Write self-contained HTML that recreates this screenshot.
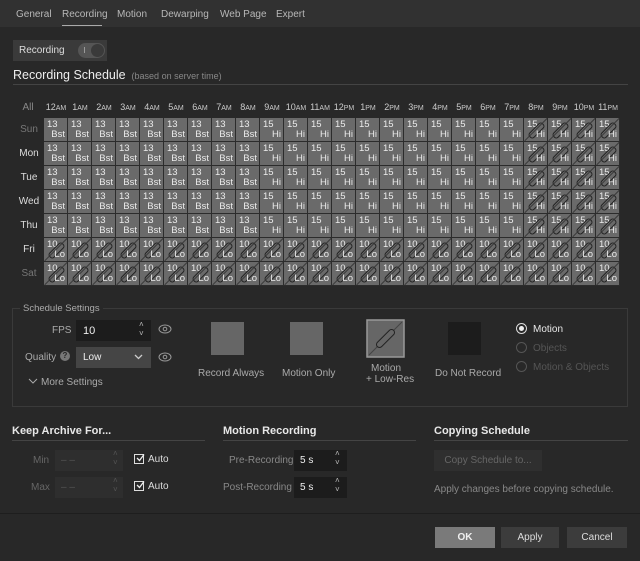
<!DOCTYPE html>
<html><head><meta charset="utf-8">
<style>
*{box-sizing:border-box}
body{margin:0;width:640px;height:561px;background:#282828;font-family:"Liberation Sans",sans-serif;color:#ddd;position:relative;overflow:hidden;font-size:10px}
.a{position:absolute;white-space:nowrap}
.tabs{position:absolute;left:0;top:0;width:640px;height:27px;background:#313131}
.tabs span{position:absolute;top:9px;font-size:10px;color:#b8b8b8}
.g{position:absolute;left:44px;top:118px;width:576px;display:flex;flex-wrap:wrap;background:#2c2c2c}
.g i{display:block;width:23px;height:23px;margin:0 1px 1px 0;background:#6a6a6a;position:relative;font-style:normal;font-size:9.5px;line-height:9px;color:#ececec;padding:2px 0 0 3px;overflow:hidden}
.g i b{position:absolute;right:2px;bottom:2px;font-weight:normal;z-index:2}
.g i.p::before{content:"";position:absolute;left:3px;top:9px;width:17px;height:5px;border:1px solid #222;border-radius:3px;transform:rotate(-45deg)}
.g i.p::after{content:"";position:absolute;left:-4px;top:11px;width:32px;height:1px;background:#3a3a3a;transform:rotate(-45deg)}
.hd span{position:absolute;top:102px;width:24px;text-align:center;font-size:9px;color:#ccc}
.hd small{font-size:7px}
.day{position:absolute;left:16px;width:26px;text-align:center;font-size:10px;color:#ddd}
.lbl{color:#aaa}
.btn{position:absolute;height:21px;top:527px;text-align:center;line-height:21px;font-size:10px;color:#ddd;background:#3c3c3c}
.line{position:absolute;height:1px;background:#444}
</style></head><body>
<div class="tabs">
<span style="left:16px">General</span><span style="left:62px">Recording</span><span style="left:117px">Motion</span><span style="left:161px">Dewarping</span><span style="left:220px">Web Page</span><span style="left:276px">Expert</span>
<div style="position:absolute;left:62px;top:25px;width:40px;height:1px;background:#aaa"></div>
</div>

<div class="a" style="left:13px;top:40px;width:94px;height:21px;background:#3a3a3a"></div>
<div class="a" style="left:19px;top:45px;color:#ddd">Recording</div>
<div class="a" style="left:78px;top:43px;width:27px;height:15px;border-radius:8px;background:#555"></div>
<div class="a" style="left:91px;top:44px;width:13px;height:13px;border-radius:7px;background:#3a3a3a"></div>
<div class="a" style="left:84px;top:47px;width:1px;height:6px;background:#999"></div>

<div class="a" style="left:13px;top:68px;font-size:12.5px;color:#eee">Recording Schedule <span style="font-size:9px;color:#888">&nbsp;(based on server time)</span></div>
<div class="line" style="left:13px;top:84px;width:615px"></div>

<div class="hd">
<span style="left:16px;color:#888;font-size:10px">All</span>
<span style="left:44px">12<small>AM</small></span><span style="left:68px">1<small>AM</small></span><span style="left:92px">2<small>AM</small></span><span style="left:116px">3<small>AM</small></span><span style="left:140px">4<small>AM</small></span><span style="left:164px">5<small>AM</small></span><span style="left:188px">6<small>AM</small></span><span style="left:212px">7<small>AM</small></span><span style="left:236px">8<small>AM</small></span><span style="left:260px">9<small>AM</small></span><span style="left:284px">10<small>AM</small></span><span style="left:308px">11<small>AM</small></span><span style="left:332px">12<small>PM</small></span><span style="left:356px">1<small>PM</small></span><span style="left:380px">2<small>PM</small></span><span style="left:404px">3<small>PM</small></span><span style="left:428px">4<small>PM</small></span><span style="left:452px">5<small>PM</small></span><span style="left:476px">6<small>PM</small></span><span style="left:500px">7<small>PM</small></span><span style="left:524px">8<small>PM</small></span><span style="left:548px">9<small>PM</small></span><span style="left:572px">10<small>PM</small></span><span style="left:596px">11<small>PM</small></span>
</div>

<div class="day" style="top:124px;color:#777">Sun</div>
<div class="day" style="top:148px">Mon</div>
<div class="day" style="top:172px">Tue</div>
<div class="day" style="top:196px">Wed</div>
<div class="day" style="top:220px">Thu</div>
<div class="day" style="top:244px">Fri</div>
<div class="day" style="top:268px;color:#777">Sat</div>

<div class="g">
<i>13<b>Bst</b></i><i>13<b>Bst</b></i><i>13<b>Bst</b></i><i>13<b>Bst</b></i><i>13<b>Bst</b></i><i>13<b>Bst</b></i><i>13<b>Bst</b></i><i>13<b>Bst</b></i><i>13<b>Bst</b></i><i>15<b>Hi</b></i><i>15<b>Hi</b></i><i>15<b>Hi</b></i><i>15<b>Hi</b></i><i>15<b>Hi</b></i><i>15<b>Hi</b></i><i>15<b>Hi</b></i><i>15<b>Hi</b></i><i>15<b>Hi</b></i><i>15<b>Hi</b></i><i>15<b>Hi</b></i><i class="p">15<b>Hi</b></i><i class="p">15<b>Hi</b></i><i class="p">15<b>Hi</b></i><i class="p">15<b>Hi</b></i>
<i>13<b>Bst</b></i><i>13<b>Bst</b></i><i>13<b>Bst</b></i><i>13<b>Bst</b></i><i>13<b>Bst</b></i><i>13<b>Bst</b></i><i>13<b>Bst</b></i><i>13<b>Bst</b></i><i>13<b>Bst</b></i><i>15<b>Hi</b></i><i>15<b>Hi</b></i><i>15<b>Hi</b></i><i>15<b>Hi</b></i><i>15<b>Hi</b></i><i>15<b>Hi</b></i><i>15<b>Hi</b></i><i>15<b>Hi</b></i><i>15<b>Hi</b></i><i>15<b>Hi</b></i><i>15<b>Hi</b></i><i class="p">15<b>Hi</b></i><i class="p">15<b>Hi</b></i><i class="p">15<b>Hi</b></i><i class="p">15<b>Hi</b></i>
<i>13<b>Bst</b></i><i>13<b>Bst</b></i><i>13<b>Bst</b></i><i>13<b>Bst</b></i><i>13<b>Bst</b></i><i>13<b>Bst</b></i><i>13<b>Bst</b></i><i>13<b>Bst</b></i><i>13<b>Bst</b></i><i>15<b>Hi</b></i><i>15<b>Hi</b></i><i>15<b>Hi</b></i><i>15<b>Hi</b></i><i>15<b>Hi</b></i><i>15<b>Hi</b></i><i>15<b>Hi</b></i><i>15<b>Hi</b></i><i>15<b>Hi</b></i><i>15<b>Hi</b></i><i>15<b>Hi</b></i><i class="p">15<b>Hi</b></i><i class="p">15<b>Hi</b></i><i class="p">15<b>Hi</b></i><i class="p">15<b>Hi</b></i>
<i>13<b>Bst</b></i><i>13<b>Bst</b></i><i>13<b>Bst</b></i><i>13<b>Bst</b></i><i>13<b>Bst</b></i><i>13<b>Bst</b></i><i>13<b>Bst</b></i><i>13<b>Bst</b></i><i>13<b>Bst</b></i><i>15<b>Hi</b></i><i>15<b>Hi</b></i><i>15<b>Hi</b></i><i>15<b>Hi</b></i><i>15<b>Hi</b></i><i>15<b>Hi</b></i><i>15<b>Hi</b></i><i>15<b>Hi</b></i><i>15<b>Hi</b></i><i>15<b>Hi</b></i><i>15<b>Hi</b></i><i class="p">15<b>Hi</b></i><i class="p">15<b>Hi</b></i><i class="p">15<b>Hi</b></i><i class="p">15<b>Hi</b></i>
<i>13<b>Bst</b></i><i>13<b>Bst</b></i><i>13<b>Bst</b></i><i>13<b>Bst</b></i><i>13<b>Bst</b></i><i>13<b>Bst</b></i><i>13<b>Bst</b></i><i>13<b>Bst</b></i><i>13<b>Bst</b></i><i>15<b>Hi</b></i><i>15<b>Hi</b></i><i>15<b>Hi</b></i><i>15<b>Hi</b></i><i>15<b>Hi</b></i><i>15<b>Hi</b></i><i>15<b>Hi</b></i><i>15<b>Hi</b></i><i>15<b>Hi</b></i><i>15<b>Hi</b></i><i>15<b>Hi</b></i><i class="p">15<b>Hi</b></i><i class="p">15<b>Hi</b></i><i class="p">15<b>Hi</b></i><i class="p">15<b>Hi</b></i>
<i class="p">10<b>Lo</b></i><i class="p">10<b>Lo</b></i><i class="p">10<b>Lo</b></i><i class="p">10<b>Lo</b></i><i class="p">10<b>Lo</b></i><i class="p">10<b>Lo</b></i><i class="p">10<b>Lo</b></i><i class="p">10<b>Lo</b></i><i class="p">10<b>Lo</b></i><i class="p">10<b>Lo</b></i><i class="p">10<b>Lo</b></i><i class="p">10<b>Lo</b></i><i class="p">10<b>Lo</b></i><i class="p">10<b>Lo</b></i><i class="p">10<b>Lo</b></i><i class="p">10<b>Lo</b></i><i class="p">10<b>Lo</b></i><i class="p">10<b>Lo</b></i><i class="p">10<b>Lo</b></i><i class="p">10<b>Lo</b></i><i class="p">10<b>Lo</b></i><i class="p">10<b>Lo</b></i><i class="p">10<b>Lo</b></i><i class="p">10<b>Lo</b></i>
<i class="p">10<b>Lo</b></i><i class="p">10<b>Lo</b></i><i class="p">10<b>Lo</b></i><i class="p">10<b>Lo</b></i><i class="p">10<b>Lo</b></i><i class="p">10<b>Lo</b></i><i class="p">10<b>Lo</b></i><i class="p">10<b>Lo</b></i><i class="p">10<b>Lo</b></i><i class="p">10<b>Lo</b></i><i class="p">10<b>Lo</b></i><i class="p">10<b>Lo</b></i><i class="p">10<b>Lo</b></i><i class="p">10<b>Lo</b></i><i class="p">10<b>Lo</b></i><i class="p">10<b>Lo</b></i><i class="p">10<b>Lo</b></i><i class="p">10<b>Lo</b></i><i class="p">10<b>Lo</b></i><i class="p">10<b>Lo</b></i><i class="p">10<b>Lo</b></i><i class="p">10<b>Lo</b></i><i class="p">10<b>Lo</b></i><i class="p">10<b>Lo</b></i>
</div>

<!-- Schedule settings -->
<div class="a" style="left:12px;top:308px;width:616px;height:99px;border:1px solid #3a3a3a"></div>
<div class="a" style="left:20px;top:303px;padding:0 3px;background:#282828;color:#aaa;font-size:9.5px">Schedule Settings</div>
<div class="a lbl" style="left:52px;top:325px">FPS</div>
<div class="a" style="left:76px;top:320px;width:75px;height:21px;background:#1c1c1c"></div>
<div class="a" style="left:83px;top:325px;color:#eee;font-size:11px">10</div>
<div class="a" style="left:139px;top:320px;font-size:8px;color:#bbb;line-height:9px">&#x2C4;<br>&#x2C5;</div>
<svg class="a" style="left:158px;top:324px" width="14" height="10"><ellipse cx="7" cy="5" rx="6" ry="4" fill="none" stroke="#999"/><circle cx="7" cy="5" r="1.8" fill="none" stroke="#999"/></svg>
<div class="a lbl" style="left:25px;top:352px">Quality</div>
<div class="a" style="left:60px;top:351px;width:10px;height:10px;border-radius:5px;background:#777;color:#282828;font-size:8px;font-weight:bold;text-align:center;line-height:10px">?</div>
<div class="a" style="left:76px;top:347px;width:75px;height:21px;background:#454545"></div>
<div class="a" style="left:83px;top:352px;color:#eee">Low</div>
<svg class="a" style="left:134px;top:354px" width="9" height="6"><path d="M1 1 L4.5 4.5 L8 1" fill="none" stroke="#ccc" stroke-width="1.3"/></svg>
<svg class="a" style="left:158px;top:352px" width="14" height="10"><ellipse cx="7" cy="5" rx="6" ry="4" fill="none" stroke="#999"/><circle cx="7" cy="5" r="1.8" fill="none" stroke="#999"/></svg>
<svg class="a" style="left:28px;top:378px" width="10" height="7"><path d="M1 1 L5 5 L9 1" fill="none" stroke="#aaa" stroke-width="1"/></svg>
<div class="a lbl" style="left:41px;top:377px">More Settings</div>

<div class="a" style="left:211px;top:322px;width:33px;height:33px;background:#666"></div>
<div class="a lbl" style="left:198px;top:368px">Record Always</div>
<div class="a" style="left:290px;top:322px;width:33px;height:33px;background:#666"></div>
<div class="a lbl" style="left:282px;top:368px">Motion Only</div>
<svg class="a" style="left:366px;top:319px" width="39" height="39"><rect x="1" y="1" width="37" height="37" fill="#666" stroke="#999" stroke-width="1.5"/><line x1="3" y1="36" x2="36" y2="3" stroke="#444"/><rect x="8" y="16.5" width="23" height="6" rx="3" fill="#666" stroke="#222" transform="rotate(-45 19.5 19.5)"/></svg>
<div class="a lbl" style="left:366px;top:363px;width:40px;text-align:center;line-height:11px">Motion<br>+ Low-Res</div>
<div class="a" style="left:448px;top:322px;width:33px;height:33px;background:#1c1c1c"></div>
<div class="a lbl" style="left:435px;top:368px">Do Not Record</div>

<div class="a" style="left:516px;top:323px;width:11px;height:11px;border-radius:6px;border:1px solid #ddd"></div>
<div class="a" style="left:519px;top:326px;width:5px;height:5px;border-radius:3px;background:#eee"></div>
<div class="a" style="left:533px;top:324px;color:#e8e8e8">Motion</div>
<div class="a" style="left:516px;top:342px;width:11px;height:11px;border-radius:6px;border:1px solid #555"></div>
<div class="a" style="left:533px;top:343px;color:#555">Objects</div>
<div class="a" style="left:516px;top:361px;width:11px;height:11px;border-radius:6px;border:1px solid #555"></div>
<div class="a" style="left:533px;top:362px;color:#555">Motion &amp; Objects</div>

<!-- bottom sections -->
<div class="a" style="left:12px;top:425px;font-size:11px;font-weight:bold;color:#e8e8e8">Keep Archive For...</div>
<div class="line" style="left:12px;top:440px;width:193px"></div>
<div class="a" style="left:223px;top:425px;font-size:11px;font-weight:bold;color:#e8e8e8">Motion Recording</div>
<div class="line" style="left:223px;top:440px;width:193px"></div>
<div class="a" style="left:434px;top:425px;font-size:11px;font-weight:bold;color:#e8e8e8">Copying Schedule</div>
<div class="line" style="left:434px;top:440px;width:194px"></div>

<div class="a" style="left:33px;top:455px;color:#666">Min</div>
<div class="a" style="left:55px;top:450px;width:68px;height:21px;background:#2e2e2e"></div>
<div class="a" style="left:61px;top:455px;color:#555">– –</div>
<div class="a" style="left:113px;top:449px;font-size:8px;color:#555;line-height:9px">&#x2C4;<br>&#x2C5;</div>
<div class="a" style="left:134px;top:454px;width:10px;height:10px;border:1px solid #ddd"></div>
<svg class="a" style="left:135px;top:453px" width="10" height="10"><path d="M2 5 L4.5 7.5 L9 1.5" fill="none" stroke="#eee" stroke-width="1.3"/></svg>
<div class="a" style="left:148px;top:454px;color:#ddd">Auto</div>
<div class="a" style="left:31px;top:482px;color:#666">Max</div>
<div class="a" style="left:55px;top:477px;width:68px;height:21px;background:#2e2e2e"></div>
<div class="a" style="left:61px;top:482px;color:#555">– –</div>
<div class="a" style="left:113px;top:476px;font-size:8px;color:#555;line-height:9px">&#x2C4;<br>&#x2C5;</div>
<div class="a" style="left:134px;top:481px;width:10px;height:10px;border:1px solid #ddd"></div>
<svg class="a" style="left:135px;top:480px" width="10" height="10"><path d="M2 5 L4.5 7.5 L9 1.5" fill="none" stroke="#eee" stroke-width="1.3"/></svg>
<div class="a" style="left:148px;top:481px;color:#ddd">Auto</div>

<div class="a" style="left:229px;top:455px;color:#888">Pre-Recording</div>
<div class="a" style="left:294px;top:450px;width:53px;height:21px;background:#1c1c1c"></div>
<div class="a" style="left:300px;top:455px;color:#eee">5 s</div>
<div class="a" style="left:335px;top:449px;font-size:8px;color:#bbb;line-height:9px">&#x2C4;<br>&#x2C5;</div>
<div class="a" style="left:223px;top:482px;color:#888">Post-Recording</div>
<div class="a" style="left:294px;top:477px;width:53px;height:21px;background:#1c1c1c"></div>
<div class="a" style="left:300px;top:482px;color:#eee">5 s</div>
<div class="a" style="left:335px;top:476px;font-size:8px;color:#bbb;line-height:9px">&#x2C4;<br>&#x2C5;</div>

<div class="a" style="left:434px;top:450px;width:108px;height:21px;background:#2f2f2f;color:#666;text-align:center;line-height:21px">Copy Schedule to...</div>
<div class="a" style="left:434px;top:484px;color:#888">Apply changes before copying schedule.</div>

<div class="line" style="left:0;top:513px;width:640px;background:#1e1e1e"></div>
<div class="btn" style="left:435px;width:60px;background:#7a7a7a;color:#f0f0f0;font-weight:bold">OK</div>
<div class="btn" style="left:501px;width:58px">Apply</div>
<div class="btn" style="left:567px;width:60px">Cancel</div>
</body></html>
